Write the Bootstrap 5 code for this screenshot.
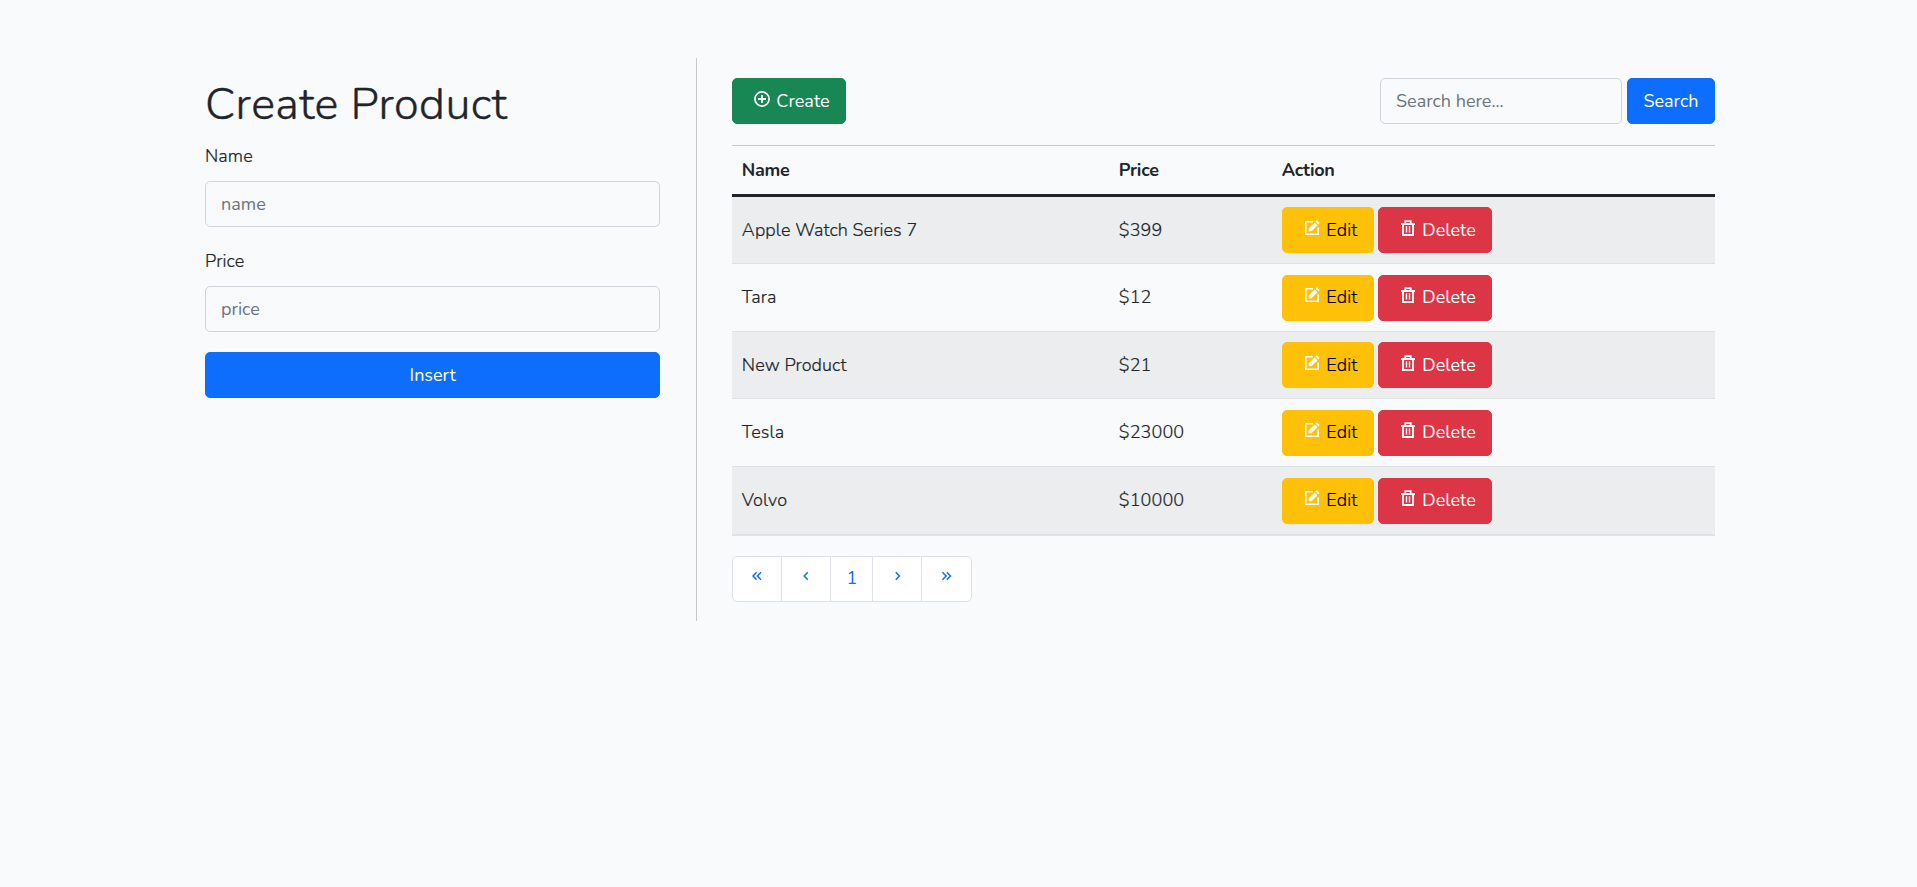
<!DOCTYPE html>
<html lang="en">
<head>
<meta charset="utf-8">
<meta name="viewport" content="width=device-width, initial-scale=1">
<title>Products</title>
<link href="https://cdn.jsdelivr.net/npm/bootstrap@5.3.0/dist/css/bootstrap.min.css" rel="stylesheet">
<style>
html{font-size:20px}
body{font-family:Nunito,Lato,"Open Sans",sans-serif;font-size:18px;font-weight:400;line-height:1.6;background:#f8fafc;color:#212529}
.page-wrap{width:1582px;margin:58px 0 0 169px;padding:0}
.pane{padding:20px 36px}
.pane-list{border-left:1px solid #c6c8ca;padding-left:35px;height:563px}
h1{font-size:45px;font-weight:300;line-height:1.2;margin-bottom:10px;letter-spacing:.43px;-webkit-text-stroke:.4px currentColor}
.form-label{margin-bottom:10px;display:block}
.form-label,.products td,.btn-edit{font-weight:300;letter-spacing:.09px;-webkit-text-stroke:.2px currentColor}
.form-control,.form-control:focus{font-size:18px;font-weight:400;line-height:1.6;background:transparent;border-color:#ced4da;border-radius:5px;height:46px}
.form-control::placeholder{color:#6c757d}
.field{margin-bottom:20.4px}
.btn{font-size:18px;font-weight:400;line-height:28.8px;border-radius:5px;height:46px;padding:7.5px 15px;white-space:nowrap;border-width:1px;-webkit-text-stroke:0}
.btn svg{width:16px;height:16px;display:inline-block;vertical-align:0;margin:0 6px 0 6px}
.btn-create,.btn-delete{width:114px;text-align:left}
.btn-edit{width:92px;text-align:left;font-weight:300;-webkit-text-stroke:.2px currentColor}
.btn-search{width:88px;padding-left:0;padding-right:0}
.search-box{width:242px}
.search-form{gap:5px}
.actions{gap:4px}
.products{table-layout:fixed;border-collapse:separate;border-spacing:0;margin:21px 0 20px;border-top:1px solid #c6c8ca;--bs-table-bg:transparent;width:983px}
.products>thead th{height:51px;padding:1px 9.5px 0;border:0;border-bottom:3px solid #212529;font-weight:700;letter-spacing:-.3px;vertical-align:middle}
.products>tbody>tr>td{height:67px;padding:0 9.5px;border:0;border-bottom:1px solid #dee2e6}
.products>tbody>tr>td:last-child{padding-left:10px}
.products>tbody>tr:nth-child(2)>td,.products>tbody>tr:nth-child(4)>td{height:68px}
.products>tbody>tr:last-child>td{height:69px;border-bottom-width:2px}
.products>tbody>tr:nth-child(odd)>td{background:#ebedef;box-shadow:none}
.page-link{font-size:18px;line-height:28.8px;height:46px;padding:7px 15px;color:#0d6efd;background:#fff;border:1px solid #dee2e6;text-align:center}
.page-item:first-child .page-link{border-radius:5px 0 0 5px}
.page-item:last-child .page-link{border-radius:0 5px 5px 0;width:51px}
.page-link svg{width:16px;height:16px;display:inline-block;vertical-align:0}
.w-arrow{width:50px}.w-num{width:43px}
</style>
</head>
<body>
<svg class="d-none" aria-hidden="true">
<symbol id="plus" viewBox="0 0 16 16"><circle cx="8" cy="8" r="7.1" fill="none" stroke="currentColor" stroke-width="1.7"/><path d="M8 4v8M4 8h8" stroke="currentColor" stroke-width="1.8"/></symbol>
<symbol id="pencil" viewBox="0 0 16 16"><path d="M9 1.8H1.8v12.4h12.4V7.5" fill="none" stroke="currentColor" stroke-width="1.6"/><path d="M4.7 11.3V8.5l6-6 2.8 2.8-6 6zM11.5 1.7l1.4-1.4 2.8 2.8-1.4 1.4z" fill="currentColor"/></symbol>
<symbol id="trash" viewBox="0 0 16 16"><path d="M1 4h14M5.3 3.5V1.1h5.4v2.4M3 4v11h10V4" fill="none" stroke="currentColor" stroke-width="1.8"/><path d="M6.5 6.3v6.2M9.5 6.3v6.2" stroke="currentColor" stroke-width="1.4"/></symbol>
<symbol id="left" viewBox="0 0 16 16"><path d="M9.8 4.2 6.2 8l3.6 3.8" fill="none" stroke="currentColor" stroke-width="1.5"/></symbol>
<symbol id="right" viewBox="0 0 16 16"><path d="m6.8 4.2 3.6 3.8-3.6 3.8" fill="none" stroke="currentColor" stroke-width="1.5"/></symbol>
<symbol id="left2" viewBox="0 0 16 16"><path d="M7.6 4.2 4 8l3.6 3.8M12 4.2 8.4 8l3.6 3.8" fill="none" stroke="currentColor" stroke-width="1.5"/></symbol>
<symbol id="right2" viewBox="0 0 16 16"><path d="M3.5 4.2 7.1 8l-3.6 3.8M7.9 4.2 11.5 8l-3.6 3.8" fill="none" stroke="currentColor" stroke-width="1.5"/></symbol>
</svg>
<main class="page-wrap">
<div class="row g-0">
<section class="col-4 pane">
<h1>Create Product</h1>
<form>
<div class="field"><label class="form-label" for="name">Name</label><input class="form-control" id="name" placeholder="name"></div>
<div class="field"><label class="form-label" for="price">Price</label><input class="form-control" id="price" placeholder="price"></div>
<button type="button" class="btn btn-primary w-100">Insert</button>
</form>
</section>
<section class="col-8 pane pane-list">
<div class="d-flex justify-content-between">
<button type="button" class="btn btn-success btn-create"><svg><use href="#plus"/></svg>Create</button>
<form class="d-flex search-form"><input class="form-control search-box" placeholder="Search here..." aria-label="Search"><button type="button" class="btn btn-primary btn-search">Search</button></form>
</div>
<table class="table products align-middle">
<colgroup><col style="width:377px"><col style="width:163px"><col></colgroup>
<thead><tr><th>Name</th><th>Price</th><th>Action</th></tr></thead>
<tbody>
<tr><td>Apple Watch Series 7</td><td>$399</td><td><div class="d-flex actions"><button type="button" class="btn btn-warning btn-edit"><svg class="text-white"><use href="#pencil"/></svg>Edit</button><button type="button" class="btn btn-danger btn-delete"><svg><use href="#trash"/></svg>Delete</button></div></td></tr>
<tr><td>Tara</td><td>$12</td><td><div class="d-flex actions"><button type="button" class="btn btn-warning btn-edit"><svg class="text-white"><use href="#pencil"/></svg>Edit</button><button type="button" class="btn btn-danger btn-delete"><svg><use href="#trash"/></svg>Delete</button></div></td></tr>
<tr><td>New Product</td><td>$21</td><td><div class="d-flex actions"><button type="button" class="btn btn-warning btn-edit"><svg class="text-white"><use href="#pencil"/></svg>Edit</button><button type="button" class="btn btn-danger btn-delete"><svg><use href="#trash"/></svg>Delete</button></div></td></tr>
<tr><td>Tesla</td><td>$23000</td><td><div class="d-flex actions"><button type="button" class="btn btn-warning btn-edit"><svg class="text-white"><use href="#pencil"/></svg>Edit</button><button type="button" class="btn btn-danger btn-delete"><svg><use href="#trash"/></svg>Delete</button></div></td></tr>
<tr><td>Volvo</td><td>$10000</td><td><div class="d-flex actions"><button type="button" class="btn btn-warning btn-edit"><svg class="text-white"><use href="#pencil"/></svg>Edit</button><button type="button" class="btn btn-danger btn-delete"><svg><use href="#trash"/></svg>Delete</button></div></td></tr>
</tbody>
</table>
<nav aria-label="Pages"><ul class="pagination mb-0">
<li class="page-item"><a class="page-link w-arrow" href="#"><svg><use href="#left2"/></svg></a></li>
<li class="page-item"><a class="page-link w-arrow" href="#"><svg><use href="#left"/></svg></a></li>
<li class="page-item"><a class="page-link w-num" href="#">1</a></li>
<li class="page-item"><a class="page-link w-arrow" href="#"><svg><use href="#right"/></svg></a></li>
<li class="page-item"><a class="page-link w-arrow" href="#"><svg><use href="#right2"/></svg></a></li>
</ul></nav>
</section>
</div>
</main>
<script src="https://cdn.jsdelivr.net/npm/bootstrap@5.3.0/dist/js/bootstrap.bundle.min.js"></script>
</body>
</html>
